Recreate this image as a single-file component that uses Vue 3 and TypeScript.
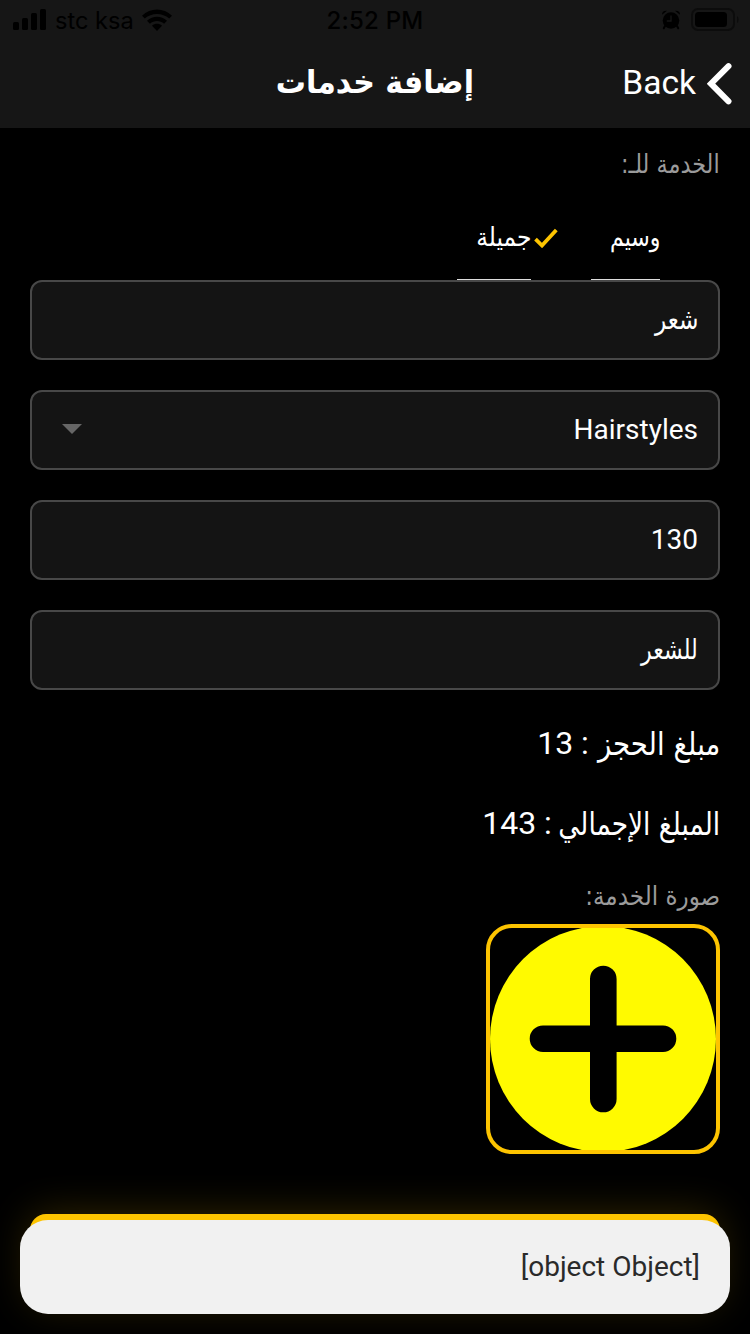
<script setup lang="ts">
interface Field {
  id: string
  value: string
  kind: 'ar' | 'latin'
  select?: boolean
}
interface Total {
  id: string
  label: string
  amount: number
}

const fields: Field[] = [
  { id: 'category', value: 'شعر', kind: 'ar' },
  { id: 'service', value: 'Hairstyles', kind: 'latin', select: true },
  { id: 'price', value: '130', kind: 'latin' },
  { id: 'details', value: 'للشعر', kind: 'ar' },
]
const totals: Total[] = [
  { id: 'deposit', label: 'مبلغ الحجز', amount: 13 },
  { id: 'grand', label: 'المبلغ الإجمالي', amount: 143 },
]
</script>

<template>
  <main class="screen">
    <header class="header">
      <div class="status">
        <div class="carrier">
          <svg class="signal" width="34" height="22" viewBox="0 0 34 22">
            <rect x="0" y="13" width="6" height="8" rx="1.5" />
            <rect x="9" y="9" width="6" height="12" rx="1.5" />
            <rect x="18" y="4" width="6" height="17" rx="1.5" />
            <rect x="27" y="0" width="6" height="21" rx="1.5" />
          </svg>
          <span class="carrier-name">stc ksa</span>
          <svg class="wifi" width="30" height="23" viewBox="0 0 30 23">
            <path d="M0 6.8C8.4-1.6 21.6-1.6 30 6.8L27.2 9.6C20.4 3.4 9.6 3.4 2.8 9.6Z" />
            <path d="M5 11.8C10.8 6.4 19.2 6.4 25 11.8L22.1 14.7C18 11 12 11 7.9 14.7Z" />
            <path d="M10 16.7C12.8 14.2 17.2 14.2 20 16.7L15 22Z" />
          </svg>
        </div>
        <span class="clock">2:52 PM</span>
        <div class="indicators">
          <svg width="18" height="20" viewBox="0 0 18 20">
            <circle cx="9" cy="10.5" r="8.3" />
            <path d="M0 4.8Q0 .4 5 .8ZM18 4.8Q18 .4 13 .8Z" />
            <path d="M3 16L1.8 18.3M15 16l1.2 2.3" stroke="#000" stroke-width="2" stroke-linecap="round" />
            <path d="M9 5.5V11H4.8" fill="none" stroke="#161616" stroke-width="1.3" />
          </svg>
          <svg width="48" height="24" viewBox="0 0 48 24">
            <rect x="1" y="1" width="42" height="21" rx="6" fill="none" stroke="#0c0c0c" stroke-width="2" />
            <rect x="4" y="4" width="32" height="15" rx="3.5" />
            <path d="M46 8Q47.6 9 47.6 11.5T46 15Z" fill="#0c0c0c" />
          </svg>
        </div>
      </div>
      <div class="navbar">
        <h1 class="ar title">إضافة خدمات</h1>
        <button class="back" type="button">
          <span class="back-text">Back</span>
          <svg width="25" height="42" viewBox="0 0 25 42">
            <path d="M21.5 3.2L4 20.7L21.5 38.3" fill="none" stroke="#fff" stroke-width="6" stroke-linecap="round" />
          </svg>
        </button>
      </div>
    </header>

    <section class="form" dir="rtl">
      <p class="hint"><span class="ar for-label">الخدمة للـ:</span></p>
      <div class="choices">
        <div class="choice first"><span class="ar choice-a">وسيم</span></div>
        <div class="choice second">
          <svg class="check" width="24" height="20" viewBox="0 0 24 20">
            <path d="M1.5 11.2L8 17.5L22.3 2" fill="none" stroke="#fdc400" stroke-width="3.8" />
          </svg>
          <span class="ar choice-b">جميلة</span>
        </div>
      </div>

      <div class="fields">
        <div v-for="field in fields" :key="field.id" class="field">
          <span :class="[field.kind, field.id]">{{ field.value }}</span>
          <svg v-if="field.select" class="caret" width="20" height="10" viewBox="0 0 20 10">
            <path d="M0 0H20L10 10Z" fill="#666" />
          </svg>
        </div>
      </div>

      <p v-for="total in totals" :key="total.id" class="total">
        <span class="ar" :class="total.id">{{ total.label }}</span>
        <span class="amount">: {{ total.amount }}</span>
      </p>

      <p class="hint photo-hint"><span class="ar photo-label">صورة الخدمة:</span></p>
      <button class="photo" type="button">
        <svg width="226" height="222" viewBox="0 0 226 222">
          <circle cx="113" cy="111" r="113" fill="#fffa00" />
          <path d="M113.3 51V171M53 110.7H173" stroke="#000" stroke-width="26.6" stroke-linecap="round" />
        </svg>
      </button>
    </section>

    <div class="submit"></div>
    <div class="toast">[object Object]</div>
  </main>
</template>

<style>
body { margin: 0; background: #000; }
</style>

<style scoped>
.screen {
  position: relative;
  width: 750px;
  height: 1334px;
  overflow: hidden;
  background: #000;
  color: #fff;
  font-family: Roboto, "DejaVu Sans", sans-serif;
}
p, h1 { margin: 0; font-weight: 400; }
svg { display: block; flex: none; }
button { border: 0; padding: 0; background: none; color: inherit; font: inherit; }
.ar {
  display: inline-block;
  font-family: "DejaVu Sans", sans-serif;
  white-space: nowrap;
  direction: rtl;
  transform-origin: right center;
}
/* Condensed Arabic letterforms */
.for-label { transform: scaleX(0.86); }
.choice-a { transform: scaleX(0.85); }
.choice-b { transform: scaleX(0.9); }
.category { transform: scaleX(0.83); }
.details { transform: scaleX(0.79); }
.deposit { transform: scaleX(0.86); margin-left: -19px; }
.grand { transform: scaleX(0.825); margin-left: -36px; }
.photo-label { transform: scaleX(0.887); }
.header { height: 128px; background: #161616; }
.status {
  display: grid;
  grid-template-columns: 1fr auto 1fr;
  height: 40px;
  align-items: center;
  color: #000;
  font-family: Inter, sans-serif;
  font-size: 24px;
}
.carrier { display: flex; align-items: center; padding-left: 13px; }
.carrier-name { margin-left: 8px; width: 78px; white-space: nowrap; font-size: 23.6px; }
.wifi { margin-left: 9px; }
.clock { font-weight: 500; letter-spacing: 0.2px; }
.indicators { display: flex; justify-content: flex-end; align-items: center; gap: 11px; padding-right: 11px; }
.navbar { position: relative; height: 88px; }
.title {
  position: absolute;
  right: 276px;
  top: 22px;
  font-size: 32px;
  line-height: 40px;
  font-weight: 700;
  transform: scaleX(0.94);
}
.back {
  display: flex;
  align-items: center;
  justify-content: flex-end;
  width: 100%;
  height: 87px;
  padding-right: 18px;
  gap: 11px;
  font-size: 33.6px;
}
.back-text { padding-bottom: 2px; }
.form { padding: 0 30px; }
.hint { height: 72px; line-height: 73px; color: #9b9b9b; font-size: 26px; }
.choices { display: flex; height: 80px; padding-right: 60px; font-size: 26px; line-height: 74px; }
.choice { display: flex; box-sizing: border-box; height: 80px; border-bottom: 1px solid #ddd; }
.first { width: 69px; }
.second { position: relative; width: 74px; margin-right: 60px; }
.check { position: absolute; right: -27px; top: 28px; }
.fields { display: grid; gap: 30px; }
.field {
  box-sizing: border-box;
  display: flex;
  align-items: center;
  justify-content: space-between;
  height: 80px;
  padding: 0 20px 2px 30px;
  border: 2px solid #484848;
  border-radius: 12px;
  background: #141414;
  font-size: 28px;
}
.total { display: flex; align-items: center; gap: 8px; height: 80px; font-size: 32px; }
.amount { padding-bottom: 2px; }
.fields + .total { margin-top: 14px; }
.photo-hint { height: 60px; line-height: 65px; }
.photo {
  box-sizing: border-box;
  display: block;
  width: 234px;
  height: 230px;
  border: 4px solid #fdc400;
  border-radius: 26px;
  overflow: hidden;
}
.submit, .toast { position: absolute; box-sizing: border-box; }
.submit {
  left: 30px;
  top: 1214px;
  width: 690px;
  height: 90px;
  border-radius: 16px;
  background: #fdc400;
  box-shadow: 0 0 40px rgba(253, 196, 0, 0.2);
}
.toast {
  left: 20px;
  top: 1220px;
  width: 710px;
  height: 94px;
  padding-right: 30px;
  border-radius: 28px;
  background: #f1f1f1;
  color: #2a2a2a;
  font-size: 28px;
  line-height: 94px;
  text-align: right;
}
</style>
